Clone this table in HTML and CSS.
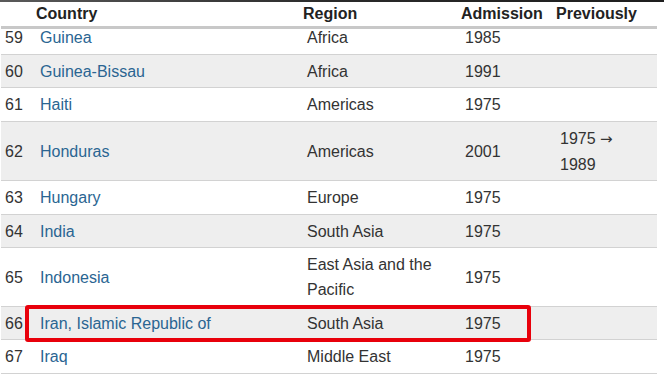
FILE: index.html
```html
<!DOCTYPE html>
<html>
<head>
<meta charset="utf-8">
<link rel="stylesheet" href="styles.css">
</head>
<body>
<div class="page">
  <table class="members">
    <colgroup>
      <col class="c-num"><col class="c-country"><col class="c-region"><col class="c-adm"><col class="c-prev">
    </colgroup>
    <thead>
      <tr><th></th><th>Country</th><th>Region</th><th>Admission</th><th>Previously</th></tr>
    </thead>
    <tbody>
      <tr class="cut"><td><div>59</div></td><td><div><a>Guinea</a></div></td><td><div>Africa</div></td><td><div>1985</div></td><td></td></tr>
      <tr class="alt"><td>60</td><td><a>Guinea-Bissau</a></td><td>Africa</td><td>1991</td><td></td></tr>
      <tr><td>61</td><td><a>Haiti</a></td><td>Americas</td><td>1975</td><td></td></tr>
      <tr class="alt"><td>62</td><td><a>Honduras</a></td><td>Americas</td><td>2001</td><td>1975 <span class="arrow">→</span><br>1989</td></tr>
      <tr><td>63</td><td><a>Hungary</a></td><td>Europe</td><td>1975</td><td></td></tr>
      <tr class="alt"><td>64</td><td><a>India</a></td><td>South Asia</td><td>1975</td><td></td></tr>
      <tr><td>65</td><td><a>Indonesia</a></td><td>East Asia and the Pacific</td><td>1975</td><td></td></tr>
      <tr class="alt"><td>66</td><td><a>Iran, Islamic Republic of</a></td><td>South Asia</td><td>1975</td><td></td></tr>
      <tr><td>67</td><td><a>Iraq</a></td><td>Middle East</td><td>1975</td><td></td></tr>
    </tbody>
  </table>
  <div class="highlight"></div>
</div>
</body>
</html>
```
FILE: styles.css
```css
html, body {
  margin: 0;
  padding: 0;
  background: #fff;
}
body {
  font-family: "Liberation Sans", Arial, sans-serif;
  font-size: 16px;
  color: #333;
}
.page {
  position: relative;
  width: 664px;
  height: 374px;
  overflow: hidden;
}
.page::before {
  content: "";
  position: absolute;
  left: 0;
  top: 0;
  width: 664px;
  height: 2px;
  background: linear-gradient(to right, #5a5a5a, #2a2a2a 50%, #1e1e1e);
  z-index: 2;
}
.members {
  margin-left: 1px;
  width: 656px;
  table-layout: fixed;
  border-collapse: collapse;
  line-height: 25px;
}
.c-num { width: 35px; }
.c-country { width: 267px; }
.c-region { width: 158px; }
.c-adm { width: 95px; }
.c-prev { width: 101px; }
.members th {
  text-align: left;
  font-weight: bold;
  color: #222;
  padding: 1px 0 0 0;
  border-bottom: 3px solid #c8c8c8;
}
.members th:nth-child(4) {
  padding-left: 0;
}
.members td {
  padding: 4px 4px 3.5px;
  border-bottom: 1px solid #d2d2d2;
  vertical-align: middle;
}
.members tr.alt td {
  background: #eeeeee;
}
.members tr.cut td {
  padding-top: 0;
}
.members tr.cut td > div {
  margin-top: -4px;
}
.members a {
  color: #2a6592;
  text-decoration: none;
}
.arrow {
  font-family: "DejaVu Sans", sans-serif;
  font-size: 15px;
}
.highlight {
  position: absolute;
  left: 25px;
  top: 305px;
  width: 498px;
  height: 29px;
  border: 4px solid #e8000b;
  border-radius: 3px;
}
```
